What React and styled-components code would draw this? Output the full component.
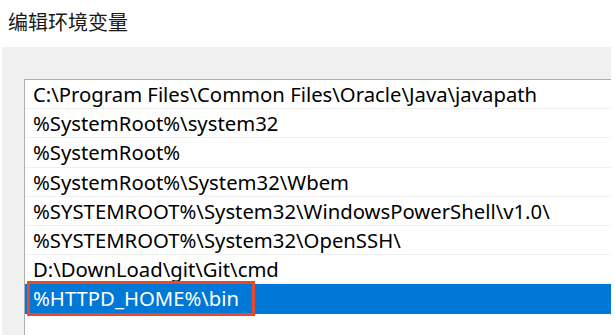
import React from "react";
import styled, { createGlobalStyle } from "styled-components";

const Global = createGlobalStyle`
  html, body { margin: 0; padding: 0; background: #ffffff; overflow: hidden; }
  body { font-family: "Noto Sans", "Noto Sans CJK SC", sans-serif; }
`;

const Page = styled.div`
  width: 615px;
  height: 335px;
  display: flex;
  flex-direction: column;
  background: #ffffff;
`;

const Title = styled.div`
  height: 47px;
  box-sizing: border-box;
  padding: 8px 0 0 8px;
  font-family: "Noto Sans CJK SC", sans-serif;
  font-size: 20px;
  line-height: 28px;
  color: #1a1a1a;
`;

const Panel = styled.div`
  flex: 1;
  margin-left: 2px;
  width: 609px;
  background: #f0f0f0;
  padding: 32px 0 0 22px;
  box-sizing: border-box;
  display: flex;
`;

const ListBox = styled.div`
  flex: 1;
  background: #ffffff;
  border-top: 1px solid #adadb5;
  border-left: 1px solid #adadb5;
  display: flex;
  flex-direction: column;
`;

const Row = styled.div`
  height: 29.2px;
  flex: none;
  box-sizing: border-box;
  padding-left: 8px;
  border-bottom: 1px solid ${(p) => (p.$selected ? "#0078d7" : "#f0f0f0")};
  background: ${(p) => (p.$selected ? "#0078d7" : "transparent")};
  color: ${(p) => (p.$selected ? "#ffffff" : "#000000")};
  font-family: "Noto Sans", sans-serif;
  font-size: 20.3px;
  line-height: 28px;
  white-space: nowrap;
  display: flex;
  align-items: center;
`;

const Marked = styled.span`
  position: relative;
  margin-left: -6px;
  padding: 0 16px 0 6px;
  line-height: 28px;
  &::after {
    content: "";
    position: absolute;
    left: 0;
    right: 0;
    top: -3px;
    bottom: -4px;
    border: 3px solid #e8492a;
    box-sizing: border-box;
  }
`;

const paths = [
  "C:\\Program Files\\Common Files\\Oracle\\Java\\javapath",
  "%SystemRoot%\\system32",
  "%SystemRoot%",
  "%SystemRoot%\\System32\\Wbem",
  "%SYSTEMROOT%\\System32\\WindowsPowerShell\\v1.0\\",
  "%SYSTEMROOT%\\System32\\OpenSSH\\",
  "D:\\DownLoad\\git\\Git\\cmd",
];

export default function App() {
  return (
    <Page>
      <Global />
      <Title>编辑环境变量</Title>
      <Panel>
        <ListBox>
          {paths.map((p) => (
            <Row key={p}>{p}</Row>
          ))}
          <Row $selected>
            <Marked>%HTTPD_HOME%\bin</Marked>
          </Row>
        </ListBox>
      </Panel>
    </Page>
  );
}
